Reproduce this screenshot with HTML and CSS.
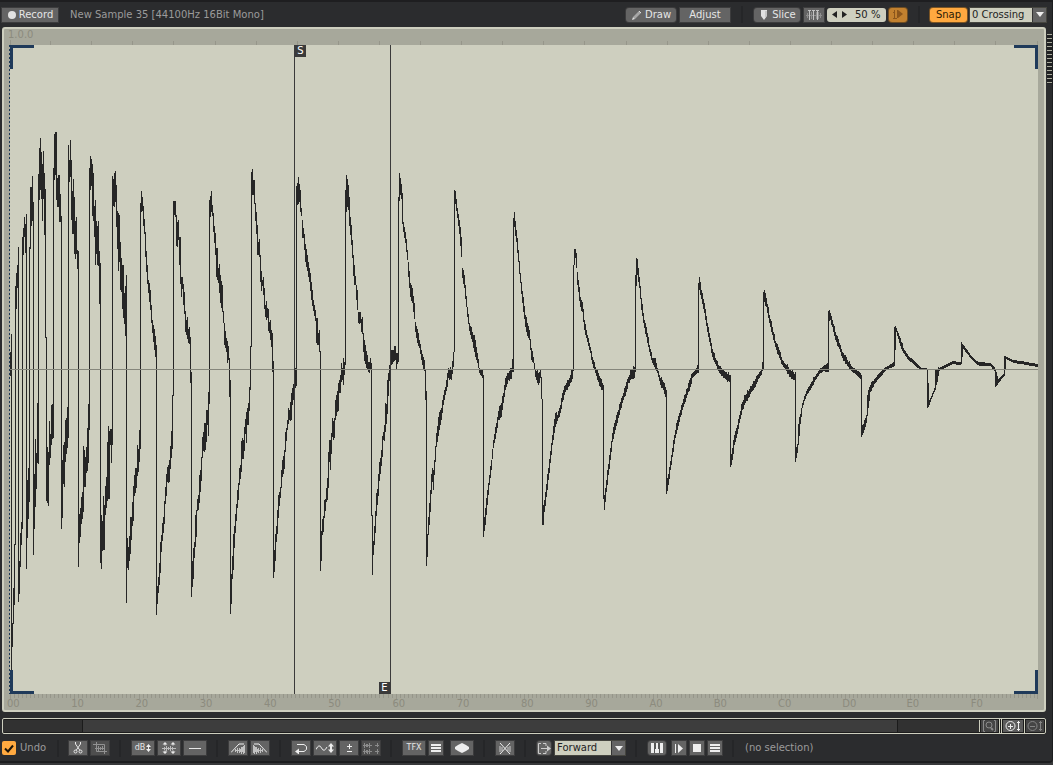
FILE: index.html
```html
<!DOCTYPE html>
<html lang="en">
<head>
<meta charset="utf-8">
<title>Sample Editor</title>
<link rel="stylesheet" href="styles.css">
</head>
<body>
<main class="editor">
  <header class="bar topbar">
    <button class="btn record"><svg width="10" height="10" viewBox="0 0 10 10"><circle cx="5" cy="5" r="4" fill="#e2e2e2"/></svg>Record</button>
    <h1 class="title">New Sample 35 [44100Hz 16Bit Mono]</h1>
    <div class="tools">
      <button class="btn round w50"><svg width="12" height="12" viewBox="0 0 12 12"><path d="M2 8L8 2l2 2-6 6z" fill="#a6a6a6"/><path d="M8 2l2 2" stroke="#ddd"/><path d="M2 8l2 2-3 1z" fill="#ddd"/></svg>Draw</button>
      <button class="btn w50">Adjust</button>
      <span class="sep top-sep"></span>
      <button class="btn round w46"><svg width="12" height="12" viewBox="0 0 12 12"><path d="M3 1h6v6L6 11 3 7z" fill="#e0e0e0"/><path d="M8 2v6" stroke="#aaa"/></svg>Slice</button>
      <button class="btn w20" aria-label="Slice markers"><svg width="16" height="12" viewBox="0 0 16 12" stroke="#8e8e8e"><path d="M0 6.500h16M1.500 4v5M5.500 3v7M7.500 4v5M10.500 3v7M12.500 3v7M14.500 4v5"/><path d="M2 1.500h3M6 1.500h3M10 1.500h3M3.500 1v10M7.500 1v10M11.500 1v10" stroke="#c2c2c2"/></svg></button>
      <div class="stepper">
        <button aria-label="Decrease"><svg width="5" height="7" viewBox="0 0 5 7"><path d="M5 0v7L0 3.500z" fill="#222"/></svg></button>
        <button aria-label="Increase"><svg width="5" height="7" viewBox="0 0 5 7"><path d="M0 0v7l5-3.500z" fill="#222"/></svg></button>
        <input aria-label="Sensitivity" value="50 %">
      </div>
      <button class="btn round dim-orange" aria-label="Play slice"><svg width="12" height="11" viewBox="0 0 12 11"><path d="M1 3.500h1M2.500 1v8M1 9.500h4M5.500 1v8" stroke="#8b561c" fill="none"/><path d="M6 1v8l5-4z" fill="#8b561c"/></svg></button>
      <span class="sep snap-sep"></span>
      <button class="btn round orange">Snap</button>
      <label class="pick snap-pick"><select aria-label="Snap mode"><option>0 Crossing</option></select><span class="arrow"><svg width="8" height="5" viewBox="0 0 8 5"><path d="M0 0h8L4 5z" fill="#eee"/></svg></span></label>
    </div>
  </header>

  <section class="stage">
    <div class="frame">
      <div class="ruler-top"><span>1.0.0</span><svg class="ticks" id="beatTicks" preserveAspectRatio="none" viewBox="0 0 1028 5"></svg></div>
      <div class="plot">
        <svg class="wave" id="wave" viewBox="10 45 1028 649" preserveAspectRatio="none" role="img" aria-label="Waveform"></svg>
        <i class="corner tl"></i><i class="corner tr"></i><i class="corner bl"></i><i class="corner br"></i>
        <div class="marker start"><b>S</b></div>
        <div class="marker end"><b>E</b></div>
      </div>
      <div class="ruler-bottom">
        <svg class="ticks" id="hexTicks" preserveAspectRatio="none" viewBox="0 0 1028 5"></svg>
        <div class="marks"><span>00</span><span>10</span><span>20</span><span>30</span><span>40</span><span>50</span><span>60</span><span>70</span><span>80</span><span>90</span><span>A0</span><span>B0</span><span>C0</span><span>D0</span><span>E0</span><span>F0</span></div>
      </div>
    </div>
    <div class="grip"></div>
  </section>

  <div class="scroller">
    <div class="track"><div class="thumb" style="margin-left:8.1%;width:83.6%"></div></div>
    <button class="zoom dim" aria-label="Zoom selection"><svg width="17" height="12" viewBox="0 0 17 12" fill="none" stroke="#8a8a8a"><path d="M4 .5H2.500v11H4M13 .5h1.500v11H13"/><circle cx="8" cy="5" r="3"/><path d="M10 8l2 2" stroke-width="2"/></svg></button>
    <span class="gap"></span>
    <button class="zoom in" aria-label="Zoom in"><svg width="18" height="12" viewBox="0 0 18 12" fill="none" stroke="#eee"><circle cx="6.500" cy="6" r="4.500"/><path d="M4 6.500h5M6.500 4v5M14.500 1v10M13 2.500h3M13 9.500h3"/></svg></button>
    <span class="split"></span>
    <button class="zoom dim out" aria-label="Zoom out"><svg width="18" height="12" viewBox="0 0 18 12" fill="none" stroke="#858585"><circle cx="6.500" cy="6" r="4.500"/><path d="M4 6.500h5M14.500 1v10M13 2.500h3M13 9.500h3"/></svg></button>
  </div>

  <footer class="bar bottombar">
    <label class="undo"><input type="checkbox" checked><span class="box"><svg width="10" height="9" viewBox="0 0 10 9"><path d="M1 4.500l3 3L9 1.500" fill="none" stroke="#1c1408" stroke-width="2"/></svg></span>Undo</label>
    <span class="sep first"></span>
    <div class="group">
      <button class="btn w18" aria-label="Cut"><svg width="10" height="12" viewBox="0 0 10 12" fill="none" stroke="#e6e6e6"><path d="M2.500 0v2L7 8.500M7.500 0v2L3 8.500"/><circle cx="2.500" cy="9.500" r="1.500"/><circle cx="7.500" cy="9.500" r="1.500"/></svg></button>
      <button class="btn w18 off" aria-label="Crop"><svg width="14" height="12" viewBox="0 0 14 12" fill="none" stroke="#929292"><path d="M0 2.500h11.500V12M3.500 0v9.500H14M2 6.500h10M5.500 4v5M7.500 5v3M9.500 4v4"/></svg></button>
    </div>
    <span class="sep"></span>
    <div class="group">
      <button class="btn w22 tiny">dB<svg width="5" height="8" viewBox="0 0 5 8"><path d="M2.500 0L5 3H0zM2.500 8L0 5h5zM2 2h1v4H2z" fill="#eee"/></svg></button>
      <button class="btn w22" aria-label="Normalize"><svg width="14" height="12" viewBox="0 0 14 12"><path d="M0 6.500h14M2.500 5v3M4.500 4v5M6.500 5v3M8.500 4v5M10.500 5v3" stroke="#bbb"/><path d="M3 0l2.500 2.500h-2v1h-1v-1H.5zM11 0l2.500 2.500h-2v1h-1v-1h-2zM3 12L.5 9.500h2v-1h1v1h2zM11 12L8.500 9.500h2v-1h1v1h2z" fill="#e8e8e8"/></svg></button>
      <button class="btn w22" aria-label="Silence"><svg width="12" height="12" viewBox="0 0 12 12"><path d="M0 6.500h12" stroke="#e6e6e6"/></svg></button>
    </div>
    <span class="sep"></span>
    <div class="group">
      <button class="btn w18" aria-label="Fade in"><svg width="14" height="11" viewBox="0 0 14 11"><path d="M4.500 6v3M6.500 5v5M8.500 5v5M10.500 4v7M12.500 3v8M13.500 2v8M5 7.500h9M9.500 6v3M11.500 4v5" stroke="#c2c2c2"/><path d="M0 9.500L8 1h5" fill="none" stroke="#eee"/></svg></button>
      <button class="btn w18" aria-label="Fade out"><svg width="14" height="11" viewBox="0 0 14 11"><path d="M9.500 6v3M7.500 5v5M5.500 5v5M3.500 4v7M1.500 3v8M.5 2v8M0 7.500h9M4.500 6v3M2.500 4v5" stroke="#c2c2c2"/><path d="M14 9.500L6 1H1" fill="none" stroke="#eee"/></svg></button>
    </div>
    <span class="sep"></span>
    <div class="group">
      <button class="btn w18" aria-label="Reverse"><svg width="14" height="11" viewBox="0 0 14 11"><path d="M3 1.500h7l2.500 2v3L10 8.500H3" fill="none" stroke="#eee"/><path d="M5 5.500v6L1 8.500z" fill="#eee"/></svg></button>
      <button class="btn w22" aria-label="DC offset"><svg width="18" height="10" viewBox="0 0 18 10"><path d="M0 6.500Q3 0 5.500 5T11 4" fill="none" stroke="#eee"/><path d="M15 0l3 3.500h-2v3h2L15 10l-3-3.500h2v-3h-2z" fill="#eee"/></svg></button>
      <button class="btn w18" aria-label="Invert phase"><svg width="8" height="10" viewBox="0 0 8 10"><path d="M2 3.500h5M4.500 1v5M2 8.500h5" stroke="#eee"/></svg></button>
      <button class="btn w18 off" aria-label="Swap channels"><svg width="16" height="12" viewBox="0 0 16 12"><path d="M0 3.500h9M1.500 1v5M3.500 2v3M4.500 2v3M6.500 1v5M0 9.500h9M1.500 7v5M3.500 8v3M4.500 8v4M6.500 7v5M12 3.500h5M14.500 1v4M12 9.500h5M14.500 7v5" stroke="#8c8c8c"/></svg></button>
    </div>
    <span class="sep"></span>
    <div class="group">
      <button class="btn w22 tiny">TFX</button>
      <button class="btn w14" aria-label="TFX list"><svg width="10" height="8" viewBox="0 0 10 8"><path d="M0 1h10M0 4h10M0 7h10" stroke="#eee" stroke-width="2"/></svg></button>
      <button class="btn w22 after8" aria-label="Process"><svg width="14" height="10" viewBox="0 0 14 10"><path d="M0 4l3-2 2-1 2-1 2 1 2 1 3 2v2l-3 2-2 1-2 1-2-1-2-1-3-2z" fill="#eee"/></svg></button>
    </div>
    <span class="sep"></span>
    <button class="btn w18" aria-label="Crossfade"><svg width="12" height="11" viewBox="0 0 12 11"><path d="M1 3v6M3 4v4M11 3v6M9 4v4" stroke="#999" stroke-width="2"/><path d="M1 0l10 11M11 0L1 11" stroke="#f0f0f0"/></svg></button>
    <span class="sep"></span>
    <button class="btn round w14" aria-label="Loop release"><svg width="14" height="11" viewBox="0 0 14 11"><path d="M4 .5H1.500v10H4M6 .5h3V3M6 10.500h3V8" fill="none" stroke="#ccc"/><path d="M4 5h6V2.500l4 3-4 3V6H4z" fill="#ccc"/></svg></button>
    <label class="pick loop-pick"><select aria-label="Loop mode"><option>Forward</option></select><span class="arrow"><svg width="8" height="5" viewBox="0 0 8 5"><path d="M0 0h8L4 5z" fill="#eee"/></svg></span></label>
    <span class="sep"></span>
    <div class="group">
      <button class="btn round w18" aria-label="Keyboard"><svg width="12" height="10" viewBox="0 0 12 10"><path d="M0 0h12v10H0z" fill="#eee"/><path d="M4 0v6M8 0v6" stroke="#555" stroke-width="2"/><path d="M3.500 5v5M8.500 5v5" stroke="#555"/></svg></button>
      <button class="btn w14 after6" aria-label="Play"><svg width="8" height="9" viewBox="0 0 8 9"><path d="M.5 0v9" stroke="#eee"/><path d="M3 0v9l5-4.500z" fill="#eee"/></svg></button>
      <button class="btn w14" aria-label="Stop"><svg width="8" height="8" viewBox="0 0 8 8"><path d="M0 0h8v8H0z" fill="#eee"/></svg></button>
      <button class="btn w14" aria-label="Options"><svg width="10" height="8" viewBox="0 0 10 8"><path d="M0 1h10M0 4h10M0 7h10" stroke="#eee" stroke-width="2"/></svg></button>
    </div>
    <span class="sep"></span>
    <span class="status">(no selection)</span>
  </footer>
</main>
<script src="wave.js"></script>
</body>
</html>
```
FILE: styles.css
```css
* { box-sizing: border-box; }
body {
  margin: 0;
  background: #38393b;
  color: #9b9b9b;
  font: 10px/14px "DejaVu Sans", Verdana, sans-serif;
}
button, input, select { font: inherit; color: inherit; margin: 0; padding: 0; border: 0; border-radius: 0; }
svg { display: block; flex: none; }
.editor {
  display: flex;
  flex-direction: column;
  height: calc(100vh - 2px);
  background: #2b2c2e;
  border-top: 2px solid #1e1e20;
  border-right: 1px solid #1c1d1f;
  border-bottom: 2px solid #1c1d1f;
  border-bottom-right-radius: 4px;
}
.bar { display: flex; align-items: center; flex: none; }
.topbar { height: 25px; padding: 0 6px 0 2px; }
.title { margin: 0 0 0 12px; font-size: 10px; font-weight: 400; white-space: nowrap; }
.tools { display: flex; align-items: center; margin-left: auto; }
.btn {
  display: inline-flex;
  align-items: center;
  justify-content: center;
  gap: 2px;
  height: 14px;
  flex: none;
  background: #646464;
  color: #e6e6e6;
  box-shadow: 0 0 0 1px #3c3c3d;
  white-space: nowrap;
}
.round { border-radius: 3px; }
.record { width: 56px; }
.w50 { width: 50px; margin-right: 4px; }
.w46 { width: 46px; margin-right: 4px; }
.w20 { width: 20px; margin-right: 3px; }
.w22 { width: 22px; }
.w18 { width: 18px; }
.w14 { width: 14px; }
.tiny { font-size: 8px; gap: 1px; }
.off { background: #4e4e4e; }
.orange { width: 37px; margin-right: 3px; background: #ffa940; color: #2b1b06; box-shadow: 0 0 0 1px #7a5424; }
.dim-orange { width: 18px; background: #c2812f; box-shadow: 0 0 0 1px #6d4c22; }
.sep { width: 2px; height: 17px; flex: none; margin: 0 11px 0 10px; background: #252628; }
.first { margin: 0 10px 0 0; }
.top-sep { margin: 0 11px 0 7px; }
.snap-sep { margin: 0 10px 0 11px; }
.stepper {
  display: flex;
  align-items: center;
  width: 59px;
  height: 14px;
  padding-left: 5px;
  margin-right: 3px;
  gap: 5px;
  border-radius: 3px;
  background: #cecfbf;
  color: #222;
}
.stepper button { background: none; }
.stepper input { width: 32px; min-width: 0; padding-left: 3px; height: 14px; background: none; }
.pick { display: flex; height: 14px; background: #cecfbf; color: #222; box-shadow: 0 0 0 1px #45453f; }
.pick select { flex: 1; min-width: 0; appearance: none; background: none; }
.arrow { display: flex; align-items: center; justify-content: center; width: 14px; background: #646464; border-left: 1px solid #333; pointer-events: none; }
.snap-pick { width: 76px; padding-left: 2px; }
.loop-pick { width: 70px; margin-left: 4px; padding-left: 2px; }

.stage { display: flex; flex: 1; min-height: 0; }
.frame {
  display: flex;
  flex-direction: column;
  flex: 1;
  margin-left: 2px;
  padding: 0 6px;
  background: #a7a89b;
  border: 2px solid #cecfbf;
  border-radius: 3px;
  color: #8c8b7e;
}
.ruler-top { display: flex; flex-direction: column; justify-content: space-between; height: 16px; line-height: 11px; }
.ruler-top span { margin-left: -2px; }
.ticks { width: 100%; height: 5px; shape-rendering: crispEdges; stroke: #96968a; fill: none; }
.plot { position: relative; flex: 1; min-height: 0; background: #cecfbf; }
.plot::before {
  content: "";
  position: absolute;
  inset: 0 auto 0 -1px;
  width: 1px;
  background: repeating-linear-gradient(#1d3957 0 2px, #a7a89b 2px 4px);
}
.wave { position: absolute; width: 100%; height: 100%; shape-rendering: crispEdges; }
.wave .line { stroke: #262626; fill: none; }
.wave .zero { stroke: #85867b; }
.corner { position: absolute; width: 24px; height: 24px; border: 0 solid #1f3a5a; }
.tl { left: 0; top: 0; border-width: 3px 0 0 3px; }
.tr { right: 0; top: 0; border-width: 3px 3px 0 0; }
.bl { left: 0; bottom: 0; border-width: 0 0 3px 3px; }
.br { right: 0; bottom: 0; border-width: 0 3px 3px 0; }
.marker { position: absolute; top: 0; bottom: 0; display: flex; width: 12px; }
.marker b { width: 12px; height: 12px; background: #3a3a3a; color: #fff; line-height: 12px; font-weight: 400; text-align: center; }
.start { left: 27.63%; border-left: 1px solid #3a3a3a; }
.end { right: 62.94%; border-right: 1px solid #3a3a3a; align-items: flex-end; }
.ruler-bottom { height: 16px; line-height: 10px; }
.marks { display: flex; }
.marks span { flex: 1; margin-left: -3px; margin-right: 3px; }
.grip {
  width: 5px;
  height: 50px;
  margin: 7px 0 0 1px;
  background: repeating-linear-gradient(#a9aa9c 0 1px, #202123 1px 4px);
}

.scroller {
  display: flex;
  align-items: center;
  flex: none;
  height: 16px;
  margin: 6px 6px 0 2px;
  border: 1px solid #cecfbf;
  border-radius: 2px;
  background: #1c1c1c;
}
.track { flex: 1; height: 12px; background: #313131; border-right: 1px solid #cecfbf; }
.thumb { height: 12px; background: #3d3d3d; border: solid #1b1b1b; border-width: 0 1px; }
.zoom { display: flex; align-items: center; justify-content: center; width: 17px; height: 12px; margin: 0 1px; background: #5c5c5c; }
.zoom.in { width: 20px; }
.zoom.out { width: 18px; }
.zoom.dim { background: #454545; }
.gap { width: 3px; height: 14px; border: solid #cecfbf; border-width: 0 1px; }
.split { width: 1px; height: 14px; background: #cecfbf; }

.bottombar { height: 26px; padding-left: 2px; margin-top: 1px; }
.undo { display: flex; align-items: center; width: 55px; gap: 4px; position: relative; }
.undo input { position: absolute; opacity: 0; width: 14px; height: 14px; }
.box { display: flex; align-items: center; justify-content: center; width: 14px; height: 14px; border-radius: 2px; background: #ffa940; }
.group { display: flex; gap: 4px; }
.after8 { margin-left: 4px; }
.after6 { margin-left: 2px; }
```
FILE: wave.js
```js
// Peak data: x, top, bottom. Columns between entries are interpolated.
const peaks = `10,352,376 11,334,692 12,623,647 13,588,624 14,544,605 15,286,545 16,273,309 17,265,288 18,247,602 19,561,594 20,533,567 21,522,545 22,237,529 23,228,255 24,217,237 25,224,253 26,214,569 27,480,538 28,468,519 29,247,502 30,187,249 31,187,226 32,176,221 33,202,555 34,474,529 35,439,507 36,453,489 37,403,463 38,174,464 39,148,200 40,138,190 41,152,199 42,164,221 43,151,199 44,173,235 45,189,338 46,337,501 47,447,503 48,452,506 49,421,465 50,434,458 51,405,445 52,404,439 53,168,438 54,134,180 55,132,175 56,132,200 57,178,207 58,175,207 59,175,222 60,194,222 61,216,529 62,460,518 63,445,484 64,442,487 65,420,462 66,418,454 67,407,448 68,145,438 69,160,182 70,140,177 71,160,220 72,191,234 73,179,234 74,197,254 75,221,259 76,217,254 77,250,269 78,251,567 79,514,543 80,508,537 81,497,524 82,492,519 83,446,512 84,450,487 85,457,487 86,447,473 87,428,471 88,404,463 89,168,430 90,156,190 91,159,186 92,164,216 93,173,221 94,206,237 95,200,265 96,221,254 97,226,265 98,221,266 99,251,304 100,263,563 101,515,569 102,521,551 103,496,550 104,505,550 105,486,515 106,477,508 107,442,501 108,426,499 109,431,499 110,429,445 111,429,463 112,176,445 113,179,206 114,173,207 115,171,202 116,185,227 117,211,249 118,213,271 119,215,262 120,242,290 121,258,292 122,265,309 123,265,318 124,293,324 125,286,336 126,275,603 127,538,568 128,547,570 129,536,561 130,517,554 131,517,540 132,502,526 133,486,521 134,475,496 135,468,493 136,468,488 137,445,476 138,449,472 139,430,462
140,203,449 141,191,212 142,197,211 143,206,226 144,219,234 145,232,257 146,251,272 147,265,284 148,280,293 149,283,302 150,290,310 151,305,323 152,320,333 153,325,342 155,336,357 156,345,615 157,586,604 158,577,593 159,563,585 160,542,573 161,535,552 162,523,541 163,517,533 164,501,524 165,487,504 166,474,496 167,467,482 168,465,483 169,460,482 170,446,469 171,431,458 172,395,449 173,201,396 174,201,215 175,201,217 176,215,246 177,222,247 178,220,240 179,237,265 180,237,284 181,277,297 182,277,289 183,284,305 184,292,314 185,311,332 186,320,335 187,317,339 188,329,343 189,327,344 190,337,383 191,372,597 192,561,587 193,548,579 194,542,558 195,515,547 196,510,537 197,499,511 198,495,510 199,475,503 200,470,492 201,457,481 202,437,458 203,432,451 204,423,452 205,423,450 206,410,442 207,410,425 208,392,436 209,200,404 210,196,217 211,191,212 212,205,216 213,213,232 214,226,243 215,233,255 216,248,277 217,248,280 218,268,283 219,264,293 220,275,303 221,281,308 222,285,312 223,311,323 224,323,345 225,331,348 226,338,352 227,341,363 228,346,360 229,358,397 230,380,614
231,574,604 232,556,579 233,534,570 234,526,548 235,514,533 236,504,521 237,490,508 238,483,500 239,468,485 240,465,479 241,441,472 242,438,459 243,440,459 244,427,451 245,419,434 246,412,443 247,408,425 248,403,425 249,387,411 250,346,390 251,172,347 252,169,195 253,180,195 254,180,204 255,203,221 256,212,234 257,225,255 258,242,255 259,239,257 260,255,282 261,271,291 262,280,286 263,277,295 264,288,309 265,305,317 266,301,320 267,308,318 268,309,331 269,322,333 270,320,340 271,330,347 272,333,372 273,361,578 274,550,572 275,534,561 276,526,542 277,510,534 278,495,518 279,492,506 280,487,498 281,470,488 282,460,477 283,456,474 284,450,469 285,432,452 286,428,441 287,420,430 288,408,424 289,410,420 290,402,421 291,393,420 292,388,405 293,384,400 294,370,400 295,368,388 296,186,386 297,183,205 298,177,204 299,184,202 300,190,212 301,208,216 302,220,238 303,228,238 305,244,262 307,255,271 309,268,282 311,282,300 313,300,311 315,310,321 316,318,343 317,318,345 318,333,345 319,330,352 320,351,571
321,531,561 322,519,535 323,516,532 324,500,518 325,499,511 326,488,502 327,478,500 328,452,488 329,440,462 330,440,470 331,433,454 332,418,437 333,421,440 334,418,438 335,400,420 337,391,412 338,383,411 339,380,393 340,375,393 341,363,382 342,368,380 343,358,385 344,362,375 345,190,365 346,175,212 347,179,207 348,185,210 349,197,226 350,217,235 351,225,245 352,240,258 353,255,276 354,265,285 355,276,285 356,285,300 357,290,310 358,312,323 360,312,323 361,319,332 362,317,334 363,333,352 364,340,361 365,345,364 366,351,368 367,355,370 368,362,372 369,362,373 370,358,369 371,363,516 372,515,575 373,541,555 374,526,545 375,511,533 376,493,516 377,489,505 378,474,496 379,462,481 380,458,474 381,450,466 382,436,457 383,432,440 384,425,441 385,403,432 386,404,424 387,380,414 388,373,396 389,365,381 390,355,376 391,350,365 393,350,362 395,346,360 396,353,370 397,353,364 398,197,362 399,173,201 400,178,195 401,184,199 402,193,224
403,222,232 405,232,243 407,250,260 408,262,277 410,283,297 412,288,303 414,303,319 415,322,332 417,329,343 419,340,348 421,350,360 423,357,370 424,360,371 425,370,400 426,391,566 427,534,557 428,517,535 430,490,512 431,474,494 432,468,482 433,470,490 434,460,475 436,433,447 439,412,430 441,408,420 443,395,405 445,387,395 447,373,387 448,368,378 451,370,380 453,352,367 454,190,352 455,191,204 457,208,218 459,220,234 461,237,257 462,268,278 464,275,288 467,307,317 469,323,331 472,332,342 475,340,357 477,353,363 479,368,373 482,370,378 483,375,537 485,508,525 487,490,505 489,475,485 491,460,470 493,440,448 496,423,433 498,411,420 501,403,417 503,393,403 505,378,390 508,373,380 511,368,379 512,359,372 513,218,372 514,212,227 516,230,242 518,250,262 520,273,283 522,291,303 525,315,327 527,323,336 529,330,340 531,348,360 533,357,363 535,370,377 538,373,385 540,370,378 541,377,399 542,399,525
543,505,525 544,500,512 546,484,497 548,468,480 550,451,463 552,435,445 555,413,427 557,415,421 560,405,413 562,393,402 565,385,392 568,380,387 570,375,383 572,369,379 573,265,371 574,249,265 575,249,258 576,253,268 577,272,285 580,297,307 582,302,312 584,320,330 587,335,342 590,347,353 592,357,364 595,367,373 598,373,382 600,378,387 602,383,390 603,385,499 604,495,510 606,480,492 608,464,475 610,448,460 612,433,442 615,420,430 618,410,418 620,402,410 623,393,400 626,382,392 628,377,383 631,370,379 634,367,378 635,275,372 636,258,286 637,259,275 639,277,288 641,298,310 644,320,328 646,327,337 649,345,352 652,358,363 655,358,369 657,368,373 660,378,385 663,382,390 665,387,397 666,390,494 668,474,485 670,461,470 672,448,457 675,430,438 677,420,430 680,410,417 683,399,407 687,388,395 690,378,387 692,373,378 695,370,375 697,365,373 698,283,373 699,277,290 701,290,299 704,303,313 707,323,332 710,338,346 712,349,357 715,358,364 718,365,371 722,370,376 725,372,379 729,375,382
730,375,467 732,448,460 734,435,445 737,425,434 739,415,423 742,402,410 745,395,403 748,391,398 751,386,392 754,381,388 758,374,379 761,369,375 762,362,371 763,292,370 764,290,302 766,298,307 769,315,323 772,327,335 775,341,347 779,350,358 782,360,365 786,365,371 790,370,377 794,374,380 795,372,462 797,444,453 798,424,445 800,414,424 802,403,408 804,396,401 807,389,394 811,382,388 815,376,380 819,369,374 823,366,371 827,363,372 828,311,372 830,313,320 832,320,327 835,332,340 839,343,349 842,352,358 847,360,366 851,366,371 855,369,374 860,373,379 861,375,437 863,424,433 866,415,423 867,395,416 870,385,392 874,379,384 879,373,378 885,367,371 889,365,368 893,362,367 894,327,366 896,328,332 899,336,343 903,348,353 908,356,360 912,359,363 916,363,367 921,368,370 926,368,370 927,369,408 929,400,405 931,396,399 934,388,392 935,370,390 939,368,371 946,364,367 952,361,364 960,362,365 961,342,364 963,345,349 967,350,354 971,356,359 975,360,363 979,362,366 990,363,366 994,367,371 995,370,387 998,379,383 1003,374,377 1004,356,376 1006,357,359 1013,360,363 1021,361,364 1037,364,367`
  .trim().split(/\s+/).map(p => p.split(",").map(Number));

const NS = "http://www.w3.org/2000/svg";
function addPath(host, d, cls) {
  const path = document.createElementNS(NS, "path");
  path.setAttribute("d", d);
  if (cls) path.setAttribute("class", cls);
  host.appendChild(path);
}

// Spikes are tall columns; the column beside one follows its neighbour instead of the spike.
const isSpike = p => p[2] - p[1] > 60;

let wave = "";
peaks.forEach((point, i) => {
  const [x, top, bottom] = point;
  wave += `M${x + 0.5} ${top}V${bottom}`;
  const next = peaks[i + 1];
  if (!next) return;
  const span = next[0] - x;
  const rough = bottom - top > 5 ? 1 : 0;
  let [, endTop, endBottom] = next;
  let startTop = top, startBottom = bottom;
  if (isSpike(next)) { endTop = top; endBottom = bottom; }
  if (isSpike(point)) {
    const down = bottom - next[2] < next[1] - top;
    startTop = down ? bottom - 8 : top;
    startBottom = down ? bottom : top + 8;
  }
  for (let k = 1; k < span; k++) {
    const t = k / span;
    const a = Math.round(startTop + (endTop - startTop) * t) - rough * ((x * 7 + k * 5) % 3);
    const b = Math.round(startBottom + (endBottom - startBottom) * t) + rough * ((x * 5 + k * 3) % 2);
    wave += `M${x + k + 0.5} ${a}V${b}`;
  }
});
const host = document.getElementById("wave");
addPath(host, wave, "line");
addPath(host, "M10 369.5H1038", "zero");

let beats = "M.5 0V5";
for (let i = 1; i <= 25; i++) beats += `M${Math.round(i * 41.1) - 0.5} 1V5`;
addPath(document.getElementById("beatTicks"), beats);

let hex = "";
for (let i = 0; i <= 256; i++) hex += `M${Math.min(Math.round(i * 4.016), 1027) + 0.5} 0V${i % 16 ? 4 : 5}`;
addPath(document.getElementById("hexTicks"), hex);
```
